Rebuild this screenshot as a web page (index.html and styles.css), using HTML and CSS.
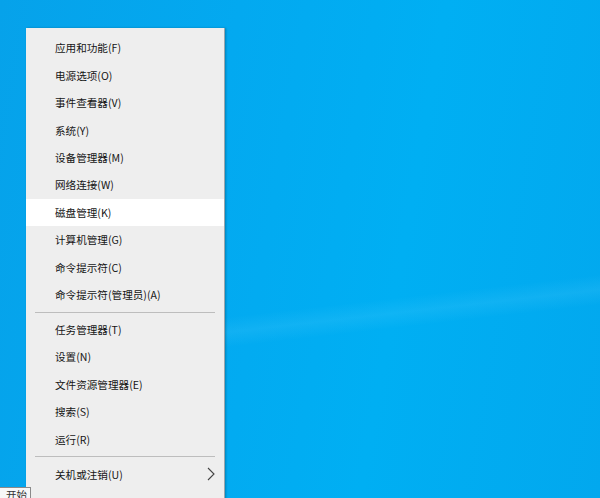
FILE: index.html
```html
<!DOCTYPE html>
<html lang="zh-CN">
<head>
<meta charset="utf-8">
<title>Win+X 菜单</title>
<link rel="stylesheet" href="styles.css">
</head>
<body>
<div class="desktop">
  <div class="streak"></div>
  <div class="menu">
    <div class="item">应用和功能(F)</div>
    <div class="item">电源选项(O)</div>
    <div class="item">事件查看器(V)</div>
    <div class="item">系统(Y)</div>
    <div class="item">设备管理器(M)</div>
    <div class="item">网络连接(W)</div>
    <div class="item hover">磁盘管理(K)</div>
    <div class="item">计算机管理(G)</div>
    <div class="item">命令提示符(C)</div>
    <div class="item">命令提示符(管理员)(A)</div>
    <div class="sep"></div>
    <div class="item">任务管理器(T)</div>
    <div class="item">设置(N)</div>
    <div class="item">文件资源管理器(E)</div>
    <div class="item">搜索(S)</div>
    <div class="item">运行(R)</div>
    <div class="sep"></div>
    <div class="item sub">关机或注销(U)
      <svg class="chev" width="8" height="14" viewBox="0 0 8 14"><path d="M1 1 L7 7 L1 13" fill="none" stroke="#444" stroke-width="1.1"/></svg>
    </div>
  </div>
  <div class="tip">开始</div>
</div>
</body>
</html>
```

FILE: styles.css
```css
html, body {
  margin: 0;
  padding: 0;
  width: 600px;
  height: 498px;
  overflow: hidden;
}
.desktop {
  position: relative;
  width: 600px;
  height: 498px;
  background: linear-gradient(100deg, #06a2ea 0%, #03a9f0 35%, #00aff3 65%, #02a8ee 100%);
  overflow: hidden;
  font-family: "Noto Sans CJK SC", "Noto Sans", sans-serif;
}
.streak {
  position: absolute;
  left: 220px;
  top: 318px;
  width: 400px;
  height: 30px;
  background: linear-gradient(180deg, rgba(255,255,255,0) 0%, rgba(110,215,255,0.14) 50%, rgba(255,255,255,0) 100%);
  transform: rotate(-6.5deg);
  transform-origin: left center;
}
.menu {
  position: absolute;
  left: 26px;
  top: 28px;
  width: 199px;
  height: 490px;
  background: #eeeeee;
  border-right: 1px solid #9aa6ad;
  box-shadow: 1px 0 2px rgba(0,0,0,0.25);
  padding-top: 6.3px;
  box-sizing: border-box;
}
.item {
  height: 27.4px;
  display: flex;
  align-items: center;
  padding-left: 29px;
  font-size: 10.6px;
  color: #151515;
  position: relative;
}
.item.hover {
  background: #ffffff;
}
.sep {
  height: 7.6px;
  display: flex;
  align-items: center;
  margin: 0 9px;
}
.sep::after {
  content: "";
  flex: 1;
  height: 1px;
  background: #bdbdbd;
}
.chev {
  position: absolute;
  right: 9px;
  top: 7px;
}
.tip {
  position: absolute;
  left: -1px;
  top: 487px;
  width: 32px;
  height: 16px;
  background: #f7f7f7;
  border: 1px solid #8a8a8a;
  font-size: 10.5px;
  color: #333;
  padding-left: 6px;
  box-sizing: border-box;
  line-height: 13px;
}
```
